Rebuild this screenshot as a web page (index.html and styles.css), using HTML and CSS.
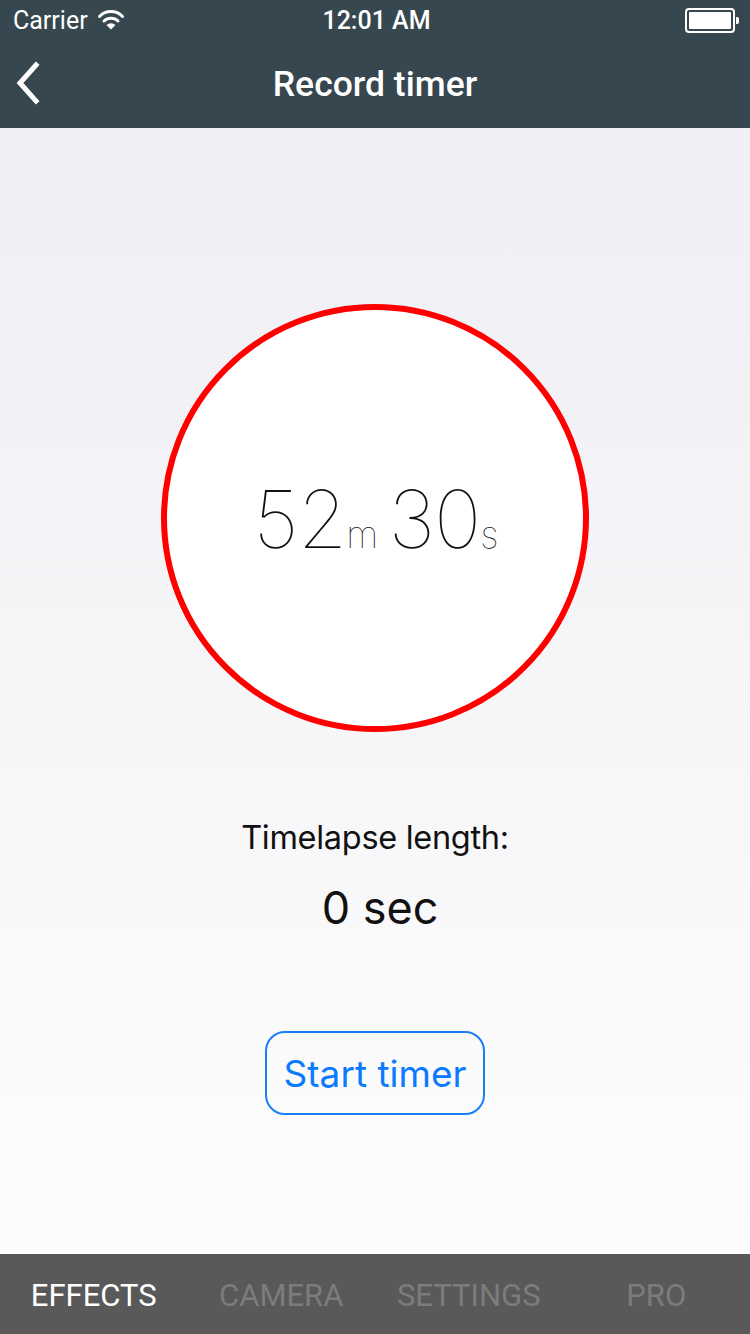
FILE: index.html
```html
<!DOCTYPE html>
<html>
<head>
<meta charset="utf-8">
<link rel="stylesheet" href="styles.css">
</head>
<body>
<div class="app">
  <div class="statusbar">
    <div class="sb-left">
      <span class="carrier">Carrier</span>
      <svg class="wifi" width="26" height="20" viewBox="0 0 26 20">
        <path d="M1.5 6.5 A16 16 0 0 1 24.5 6.5" fill="none" stroke="#fff" stroke-width="3" stroke-linecap="round"/>
        <path d="M6 11 A10 10 0 0 1 20 11" fill="none" stroke="#fff" stroke-width="3" stroke-linecap="round"/>
        <path d="M13 19.5 L8.5 15 A6.5 6.5 0 0 1 17.5 15 Z" fill="#fff"/>
      </svg>
    </div>
    <div class="sb-time">12:01 AM</div>
    <div class="sb-right">
      <div class="battery"><div class="battery-fill"></div></div>
      <div class="battery-nub"></div>
    </div>
  </div>
  <div class="navbar">
    <svg class="back" width="30" height="44" viewBox="0 0 30 44">
      <path d="M22 4 L6 22 L22 40" fill="none" stroke="#fff" stroke-width="5" stroke-linecap="square" stroke-linejoin="miter"/>
    </svg>
    <div class="nav-title">Record timer</div>
  </div>
  <div class="content">
    <div class="dial">
      <div class="time"><span class="big">52</span><span class="unit">m</span><span class="big sp">30</span><span class="unit">s</span></div>
    </div>
    <div class="label">Timelapse length:</div>
    <div class="value">0 sec</div>
    <div class="button">Start timer</div>
  </div>
  <div class="tabbar">
    <div class="tab active">EFFECTS</div>
    <div class="tab">CAMERA</div>
    <div class="tab">SETTINGS</div>
    <div class="tab">PRO</div>
  </div>
</div>
</body>
</html>
```

FILE: styles.css
```css
html, body {
  margin: 0;
  padding: 0;
}
body {
  width: 750px;
  height: 1334px;
  overflow: hidden;
  font-family: Inter, "Noto Sans", sans-serif;
}
.app {
  display: flex;
  flex-direction: column;
  height: 1334px;
}
.statusbar {
  height: 40px;
  background: #37474f;
  color: #fff;
  display: flex;
  align-items: center;
  justify-content: space-between;
  padding: 0 11px 0 13px;
  font-family: Roboto, sans-serif;
  font-size: 25px;
  position: relative;
}
.sb-left {
  display: flex;
  align-items: center;
  gap: 10px;
}
.wifi {
  margin-top: -1px;
}
.sb-time {
  position: absolute;
  left: 3px;
  right: 0;
  text-align: center;
  font-weight: 500;
  pointer-events: none;
}
.sb-right {
  display: flex;
  align-items: center;
}
.battery {
  width: 42px;
  height: 17px;
  border: 2px solid #fff;
  border-radius: 4px;
  padding: 2px;
  box-sizing: content-box;
  display: flex;
}
.battery-fill {
  flex: 1;
  background: #fff;
  border-radius: 1px;
}
.battery-nub {
  width: 3px;
  height: 7px;
  background: #fff;
  border-radius: 0 2px 2px 0;
  margin-left: 1px;
}
.navbar {
  height: 88px;
  background: #37474f;
  display: flex;
  align-items: center;
  justify-content: center;
  position: relative;
}
.back {
  position: absolute;
  left: 14px;
  top: 21px;
}
.nav-title {
  color: #fff;
  font-family: Roboto, sans-serif;
  font-weight: 500;
  font-size: 35.5px;
  margin-top: -1px;
}
.content {
  flex: 1;
  background: linear-gradient(to bottom, #efeff4, #fdfdfd);
  display: flex;
  flex-direction: column;
  align-items: center;
}
.dial {
  margin-top: 176px;
  width: 416px;
  height: 416px;
  border: 6px solid #fe0000;
  border-radius: 50%;
  background: #fff;
  display: flex;
  align-items: center;
  justify-content: center;
}
.time {
  color: #111;
  font-weight: 100;
  display: flex;
  align-items: baseline;
  padding-left: 2px;
}
.big {
  font-size: 80px;
  letter-spacing: -1px;
}
.sp {
  margin-left: 10px;
}
.unit {
  font-size: 37px;
}
.label {
  margin-top: 86px;
  font-size: 32.5px;
  color: #111;
  letter-spacing: -0.3px;
}
.value {
  margin-top: 23px;
  padding-left: 10px;
  font-size: 45px;
  color: #111;
}
.button {
  margin-top: 96px;
  width: 216px;
  height: 80px;
  border: 2px solid #1a7ff5;
  border-radius: 20px;
  display: flex;
  align-items: center;
  justify-content: center;
  color: #0a7aff;
  font-size: 37px;
}
.tabbar {
  height: 80px;
  background: #595959;
  display: grid;
  grid-template-columns: repeat(4, 1fr);
  align-items: center;
  font-family: Roboto, sans-serif;
  font-size: 31px;
}
.tab {
  text-align: center;
  color: #7c7c7c;
  margin-top: 2px;
}
.tab.active {
  color: #fff;
}
```
